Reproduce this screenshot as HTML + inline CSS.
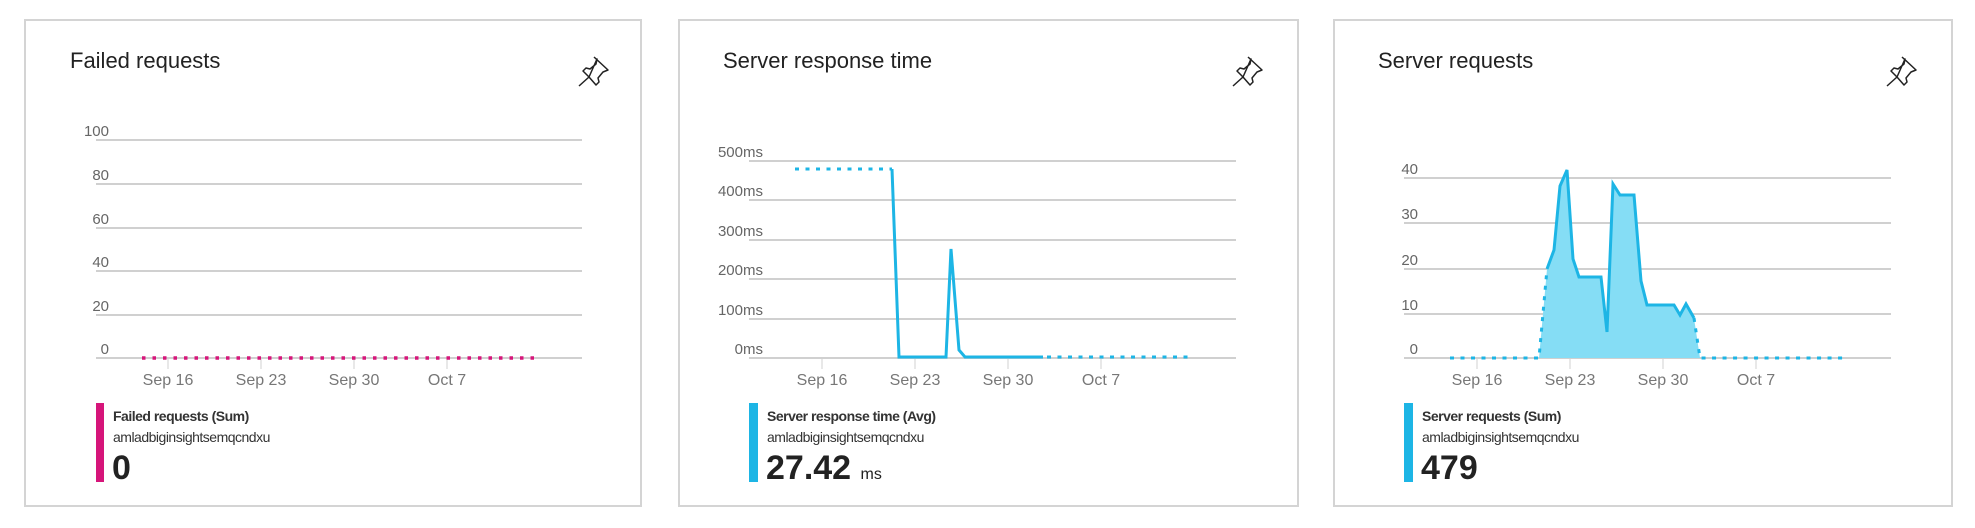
<!DOCTYPE html>
<html><head><meta charset="utf-8"><style>
body{margin:0;width:1975px;height:528px;background:#fff;position:relative;overflow:hidden;font-family:"Liberation Sans",sans-serif}
.p{position:absolute;top:19px;height:488px;width:618px;border:2px solid #d4d4d4;box-sizing:border-box}
.t{position:absolute;font-size:22px;line-height:22px;color:#222;white-space:nowrap}
.a{position:absolute;font-size:15px;line-height:15px;color:#666;text-align:right;width:60px}
.k{position:absolute;font-size:16px;line-height:16px;color:#777;width:80px;text-align:center}
.l1{position:absolute;font-size:14px;line-height:14px;color:#333;font-weight:bold;letter-spacing:-0.5px;white-space:nowrap}
.l2{position:absolute;font-size:14px;line-height:14px;color:#333;letter-spacing:-0.5px;white-space:nowrap}
.n{position:absolute;font-size:34px;line-height:34px;color:#222;font-weight:bold;white-space:nowrap}
.n span{font-size:16px;font-weight:normal}
svg{position:absolute;left:0;top:0}
</style></head><body>
<div class="p" style="left:24px"></div>
<div class="p" style="left:678px;width:621px"></div>
<div class="p" style="left:1333px;width:620px"></div>

<svg width="1975" height="528">
<g stroke="#d0d0d0" stroke-width="2">
<line x1="96" x2="582" y1="140" y2="140"/><line x1="96" x2="582" y1="184" y2="184"/><line x1="96" x2="582" y1="228" y2="228"/><line x1="96" x2="582" y1="271" y2="271"/><line x1="96" x2="582" y1="315" y2="315"/><line x1="96" x2="582" y1="358" y2="358"/>
<line x1="749" x2="1236" y1="161" y2="161"/><line x1="749" x2="1236" y1="200" y2="200"/><line x1="749" x2="1236" y1="240" y2="240"/><line x1="749" x2="1236" y1="279" y2="279"/><line x1="749" x2="1236" y1="319" y2="319"/><line x1="749" x2="1236" y1="358" y2="358"/>
<line x1="1404" x2="1891" y1="178" y2="178"/><line x1="1404" x2="1891" y1="223" y2="223"/><line x1="1404" x2="1891" y1="269" y2="269"/><line x1="1404" x2="1891" y1="314" y2="314"/><line x1="1404" x2="1891" y1="358" y2="358"/>
</g>
<g stroke="#d0d0d0" stroke-width="1">
<line x1="168" x2="168" y1="358" y2="369"/><line x1="261" x2="261" y1="358" y2="369"/><line x1="354" x2="354" y1="358" y2="369"/><line x1="447" x2="447" y1="358" y2="369"/>
<line x1="822" x2="822" y1="358" y2="369"/><line x1="915" x2="915" y1="358" y2="369"/><line x1="1008" x2="1008" y1="358" y2="369"/><line x1="1101" x2="1101" y1="358" y2="369"/>
<line x1="1477" x2="1477" y1="358" y2="369"/><line x1="1570" x2="1570" y1="358" y2="369"/><line x1="1663" x2="1663" y1="358" y2="369"/><line x1="1756" x2="1756" y1="358" y2="369"/>
</g>
<line x1="142" x2="537" y1="358" y2="358" stroke="#d6157a" stroke-width="3.5" stroke-dasharray="3.5 7"/>
<g fill="none" stroke="#1db5e5" stroke-width="3">
<polyline points="795,169 892,169" stroke-dasharray="4 6.5"/>
<polyline points="892,169 899,357 946,357 951,249 959,350 965,357 1043,357"/>
<polyline points="1047,357 1191,357" stroke-dasharray="4 6.5"/>
</g>
<polygon points="1539,358 1547,269 1554,250 1560,186 1567,170 1573,259 1579,277 1601,277 1607,332 1613,184 1620,195 1634,195 1641,281 1647,305 1674,305 1680,315 1686,304 1694,318 1700,358" fill="#85ddf5"/>
<g fill="none" stroke="#1db5e5" stroke-width="3">
<polyline points="1450,358 1539,358 1547,269" stroke-dasharray="4 6.5"/>
<polyline points="1547,269 1554,250 1560,186 1567,170 1573,259 1579,277 1601,277 1607,332 1613,184 1620,195 1634,195 1641,281 1647,305 1674,305 1680,315 1686,304 1694,318"/>
<polyline points="1694,318 1700,358 1844,358" stroke-dasharray="4 6.5"/>
</g>
<rect x="96" y="403" width="8" height="79" fill="#d6157a"/>
<rect x="749" y="403" width="9" height="79" fill="#1db5e5"/>
<rect x="1404" y="403" width="9" height="79" fill="#1db5e5"/>
<g fill="none" stroke="#222" stroke-width="1.5" stroke-linejoin="round">
<path id="pin" d="M594,57 L608,70 L603,72 L598,78 L599,82 L596,85 L589,77 L579,86 M589,77 L583,71 L586,68 L590,69 L596,64 L597,59 Z"/>
<path d="M594,57 L608,70 L603,72 L598,78 L599,82 L596,85 L589,77 L579,86 M589,77 L583,71 L586,68 L590,69 L596,64 L597,59 Z" transform="translate(654,0)"/>
<path d="M594,57 L608,70 L603,72 L598,78 L599,82 L596,85 L589,77 L579,86 M589,77 L583,71 L586,68 L590,69 L596,64 L597,59 Z" transform="translate(1308,0)"/>
</g>
</svg>

<div class="t" style="left:70px;top:50px">Failed requests</div>
<div class="t" style="left:723px;top:50px">Server response time</div>
<div class="t" style="left:1378px;top:50px">Server requests</div>

<div class="a" style="left:49px;top:124px">100</div>
<div class="a" style="left:49px;top:168px">80</div>
<div class="a" style="left:49px;top:212px">60</div>
<div class="a" style="left:49px;top:255px">40</div>
<div class="a" style="left:49px;top:299px">20</div>
<div class="a" style="left:49px;top:342px">0</div>

<div class="a" style="left:703px;top:145px">500ms</div>
<div class="a" style="left:703px;top:184px">400ms</div>
<div class="a" style="left:703px;top:224px">300ms</div>
<div class="a" style="left:703px;top:263px">200ms</div>
<div class="a" style="left:703px;top:303px">100ms</div>
<div class="a" style="left:703px;top:342px">0ms</div>

<div class="a" style="left:1358px;top:162px">40</div>
<div class="a" style="left:1358px;top:207px">30</div>
<div class="a" style="left:1358px;top:253px">20</div>
<div class="a" style="left:1358px;top:298px">10</div>
<div class="a" style="left:1358px;top:342px">0</div>

<div class="k" style="left:128px;top:373px">Sep 16</div><div class="k" style="left:221px;top:373px">Sep 23</div><div class="k" style="left:314px;top:373px">Sep 30</div><div class="k" style="left:407px;top:373px">Oct 7</div>
<div class="k" style="left:782px;top:373px">Sep 16</div><div class="k" style="left:875px;top:373px">Sep 23</div><div class="k" style="left:968px;top:373px">Sep 30</div><div class="k" style="left:1061px;top:373px">Oct 7</div>
<div class="k" style="left:1437px;top:373px">Sep 16</div><div class="k" style="left:1530px;top:373px">Sep 23</div><div class="k" style="left:1623px;top:373px">Sep 30</div><div class="k" style="left:1716px;top:373px">Oct 7</div>

<div class="l1" style="left:113px;top:409px">Failed requests (Sum)</div>
<div class="l2" style="left:113px;top:430px">amladbiginsightsemqcndxu</div>
<div class="n" style="left:112px;top:451px">0</div>

<div class="l1" style="left:767px;top:409px">Server response time (Avg)</div>
<div class="l2" style="left:767px;top:430px">amladbiginsightsemqcndxu</div>
<div class="n" style="left:766px;top:451px">27.42 <span>ms</span></div>

<div class="l1" style="left:1422px;top:409px">Server requests (Sum)</div>
<div class="l2" style="left:1422px;top:430px">amladbiginsightsemqcndxu</div>
<div class="n" style="left:1421px;top:451px">479</div>
</body></html>
